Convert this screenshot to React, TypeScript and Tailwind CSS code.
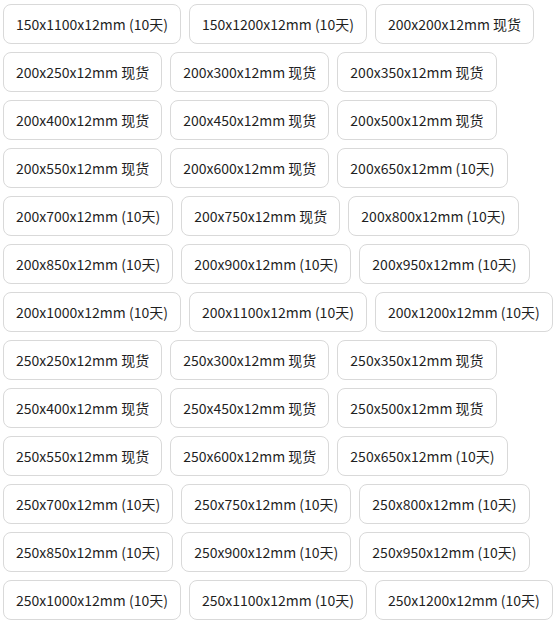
const items = [
  "150x1100x12mm (10天)", "150x1200x12mm (10天)", "200x200x12mm 现货",
  "200x250x12mm 现货", "200x300x12mm 现货", "200x350x12mm 现货",
  "200x400x12mm 现货", "200x450x12mm 现货", "200x500x12mm 现货",
  "200x550x12mm 现货", "200x600x12mm 现货", "200x650x12mm (10天)",
  "200x700x12mm (10天)", "200x750x12mm 现货", "200x800x12mm (10天)",
  "200x850x12mm (10天)", "200x900x12mm (10天)", "200x950x12mm (10天)",
  "200x1000x12mm (10天)", "200x1100x12mm (10天)", "200x1200x12mm (10天)",
  "250x250x12mm 现货", "250x300x12mm 现货", "250x350x12mm 现货",
  "250x400x12mm 现货", "250x450x12mm 现货", "250x500x12mm 现货",
  "250x550x12mm 现货", "250x600x12mm 现货", "250x650x12mm (10天)",
  "250x700x12mm (10天)", "250x750x12mm (10天)", "250x800x12mm (10天)",
  "250x850x12mm (10天)", "250x900x12mm (10天)", "250x950x12mm (10天)",
  "250x1000x12mm (10天)", "250x1100x12mm (10天)", "250x1200x12mm (10天)",
];

export default function App() {
  return (
    <div
      className="flex flex-wrap gap-2 pt-1 pl-[3px] bg-white"
      style={{ fontFamily: '"Noto Sans CJK SC", sans-serif' }}
    >
      {items.map((t) => (
        <div
          key={t}
          className="h-10 flex items-center px-3 border border-[#d9d9d9] rounded-lg text-[14px] text-[#1f1f1f] whitespace-nowrap"
        >
          {t}
        </div>
      ))}
    </div>
  );
}
